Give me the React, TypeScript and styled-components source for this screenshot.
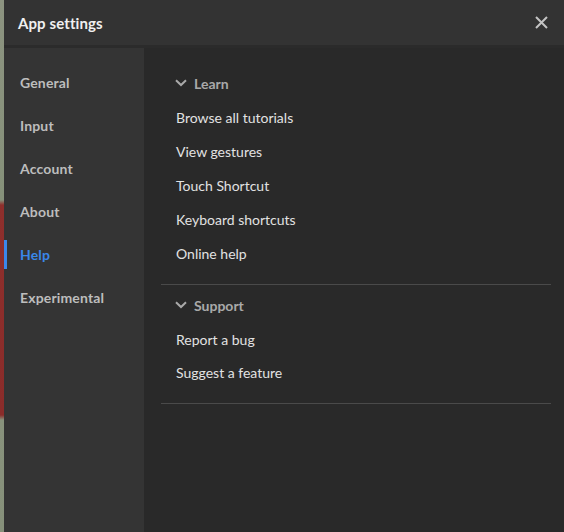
import React from "react";
import styled, { createGlobalStyle } from "styled-components";

const Global = createGlobalStyle`
  html, body { margin: 0; padding: 0; height: 100%; }
  body {
    background: linear-gradient(
      to bottom,
      #8c9380 0px, #86917a 200px,
      #8e2f2c 205px, #8a2c2a 415px,
      #88927c 420px, #86907a 532px
    );
    font-family: Lato, "Open Sans", sans-serif;
    overflow: hidden;
  }
  #root { height: 532px; }
`;

const Dialog = styled.div`
  margin-left: 4px;
  width: 560px;
  height: 532px;
  display: flex;
  flex-direction: column;
  background: #292929;
`;

const Header = styled.div`
  height: 45px;
  flex: none;
  display: flex;
  align-items: center;
  justify-content: space-between;
  padding: 0 15px 0 14px;
  background: #333333;
  border-bottom: 3px solid #2b2b2b;
`;

const Title = styled.h1`
  margin: 0;
  font-size: 15px;
  font-weight: 700;
  color: #f0f0f0;
  letter-spacing: 0.1px;
`;

const CloseButton = styled.button`
  border: 0;
  background: none;
  padding: 0;
  width: 16px;
  height: 16px;
  display: flex;
  align-items: center;
  justify-content: center;
  cursor: pointer;
`;

const Body = styled.div`
  flex: 1;
  display: flex;
  min-height: 0;
`;

const Sidebar = styled.nav`
  width: 140px;
  flex: none;
  background: #343434;
  padding-top: 13px;
  display: flex;
  flex-direction: column;
`;

const NavItem = styled.div<{ $active?: boolean }>`
  position: relative;
  height: 43px;
  display: flex;
  align-items: center;
  padding-left: 16px;
  font-size: 14px;
  font-weight: 700;
  letter-spacing: 0.15px;
  color: ${(p) => (p.$active ? "#3a87ea" : "#bdbdbd")};
  &::before {
    content: "";
    display: ${(p) => (p.$active ? "block" : "none")};
    position: absolute;
    left: 0;
    top: 7px;
    width: 3px;
    height: 29px;
    background: #3a87ea;
  }
`;

const Content = styled.main`
  flex: 1;
  padding: 13px 13px 0 17px;
  display: flex;
  flex-direction: column;
`;

const Section = styled.section<{ $top: number }>`
  padding-top: ${(p) => p.$top}px;
  padding-bottom: 14px;
  border-bottom: 1px solid #4a4a4a;
`;

const SectionHeader = styled.div`
  height: 34px;
  display: flex;
  align-items: center;
  gap: 7px;
  padding-left: 14px;
  font-size: 14px;
  font-weight: 700;
  color: #a9a9a9;
`;

const Item = styled.div<{ $h?: number }>`
  height: ${(p) => p.$h ?? 34}px;
  display: flex;
  align-items: center;
  padding-left: 15px;
  font-size: 14px;
  color: #e2e2e2;
`;

const Chevron = () => (
  <svg width="12" height="8" viewBox="0 0 12 8">
    <path d="M1 1.2 L6 6 L11 1.2" fill="none" stroke="#a9a9a9" strokeWidth="2" />
  </svg>
);

const CloseIcon = () => (
  <svg width="13" height="13" viewBox="0 0 13 13">
    <path d="M1 1 L12 12 M12 1 L1 12" stroke="#c4c4c4" strokeWidth="2" />
  </svg>
);

const navItems = ["General", "Input", "Account", "About", "Help", "Experimental"];

export default function App() {
  return (
    <>
      <Global />
      <Dialog>
        <Header>
          <Title>App settings</Title>
          <CloseButton aria-label="Close">
            <CloseIcon />
          </CloseButton>
        </Header>
        <Body>
          <Sidebar>
            {navItems.map((n) => (
              <NavItem key={n} $active={n === "Help"}>
                {n}
              </NavItem>
            ))}
          </Sidebar>
          <Content>
            <Section $top={5}>
              <SectionHeader>
                <Chevron />
                Learn
              </SectionHeader>
              <Item>Browse all tutorials</Item>
              <Item>View gestures</Item>
              <Item>Touch Shortcut</Item>
              <Item>Keyboard shortcuts</Item>
              <Item>Online help</Item>
            </Section>
            <Section $top={3}>
              <SectionHeader>
                <Chevron />
                Support
              </SectionHeader>
              <Item>Report a bug</Item>
              <Item $h={33}>Suggest a feature</Item>
            </Section>
          </Content>
        </Body>
      </Dialog>
    </>
  );
}
